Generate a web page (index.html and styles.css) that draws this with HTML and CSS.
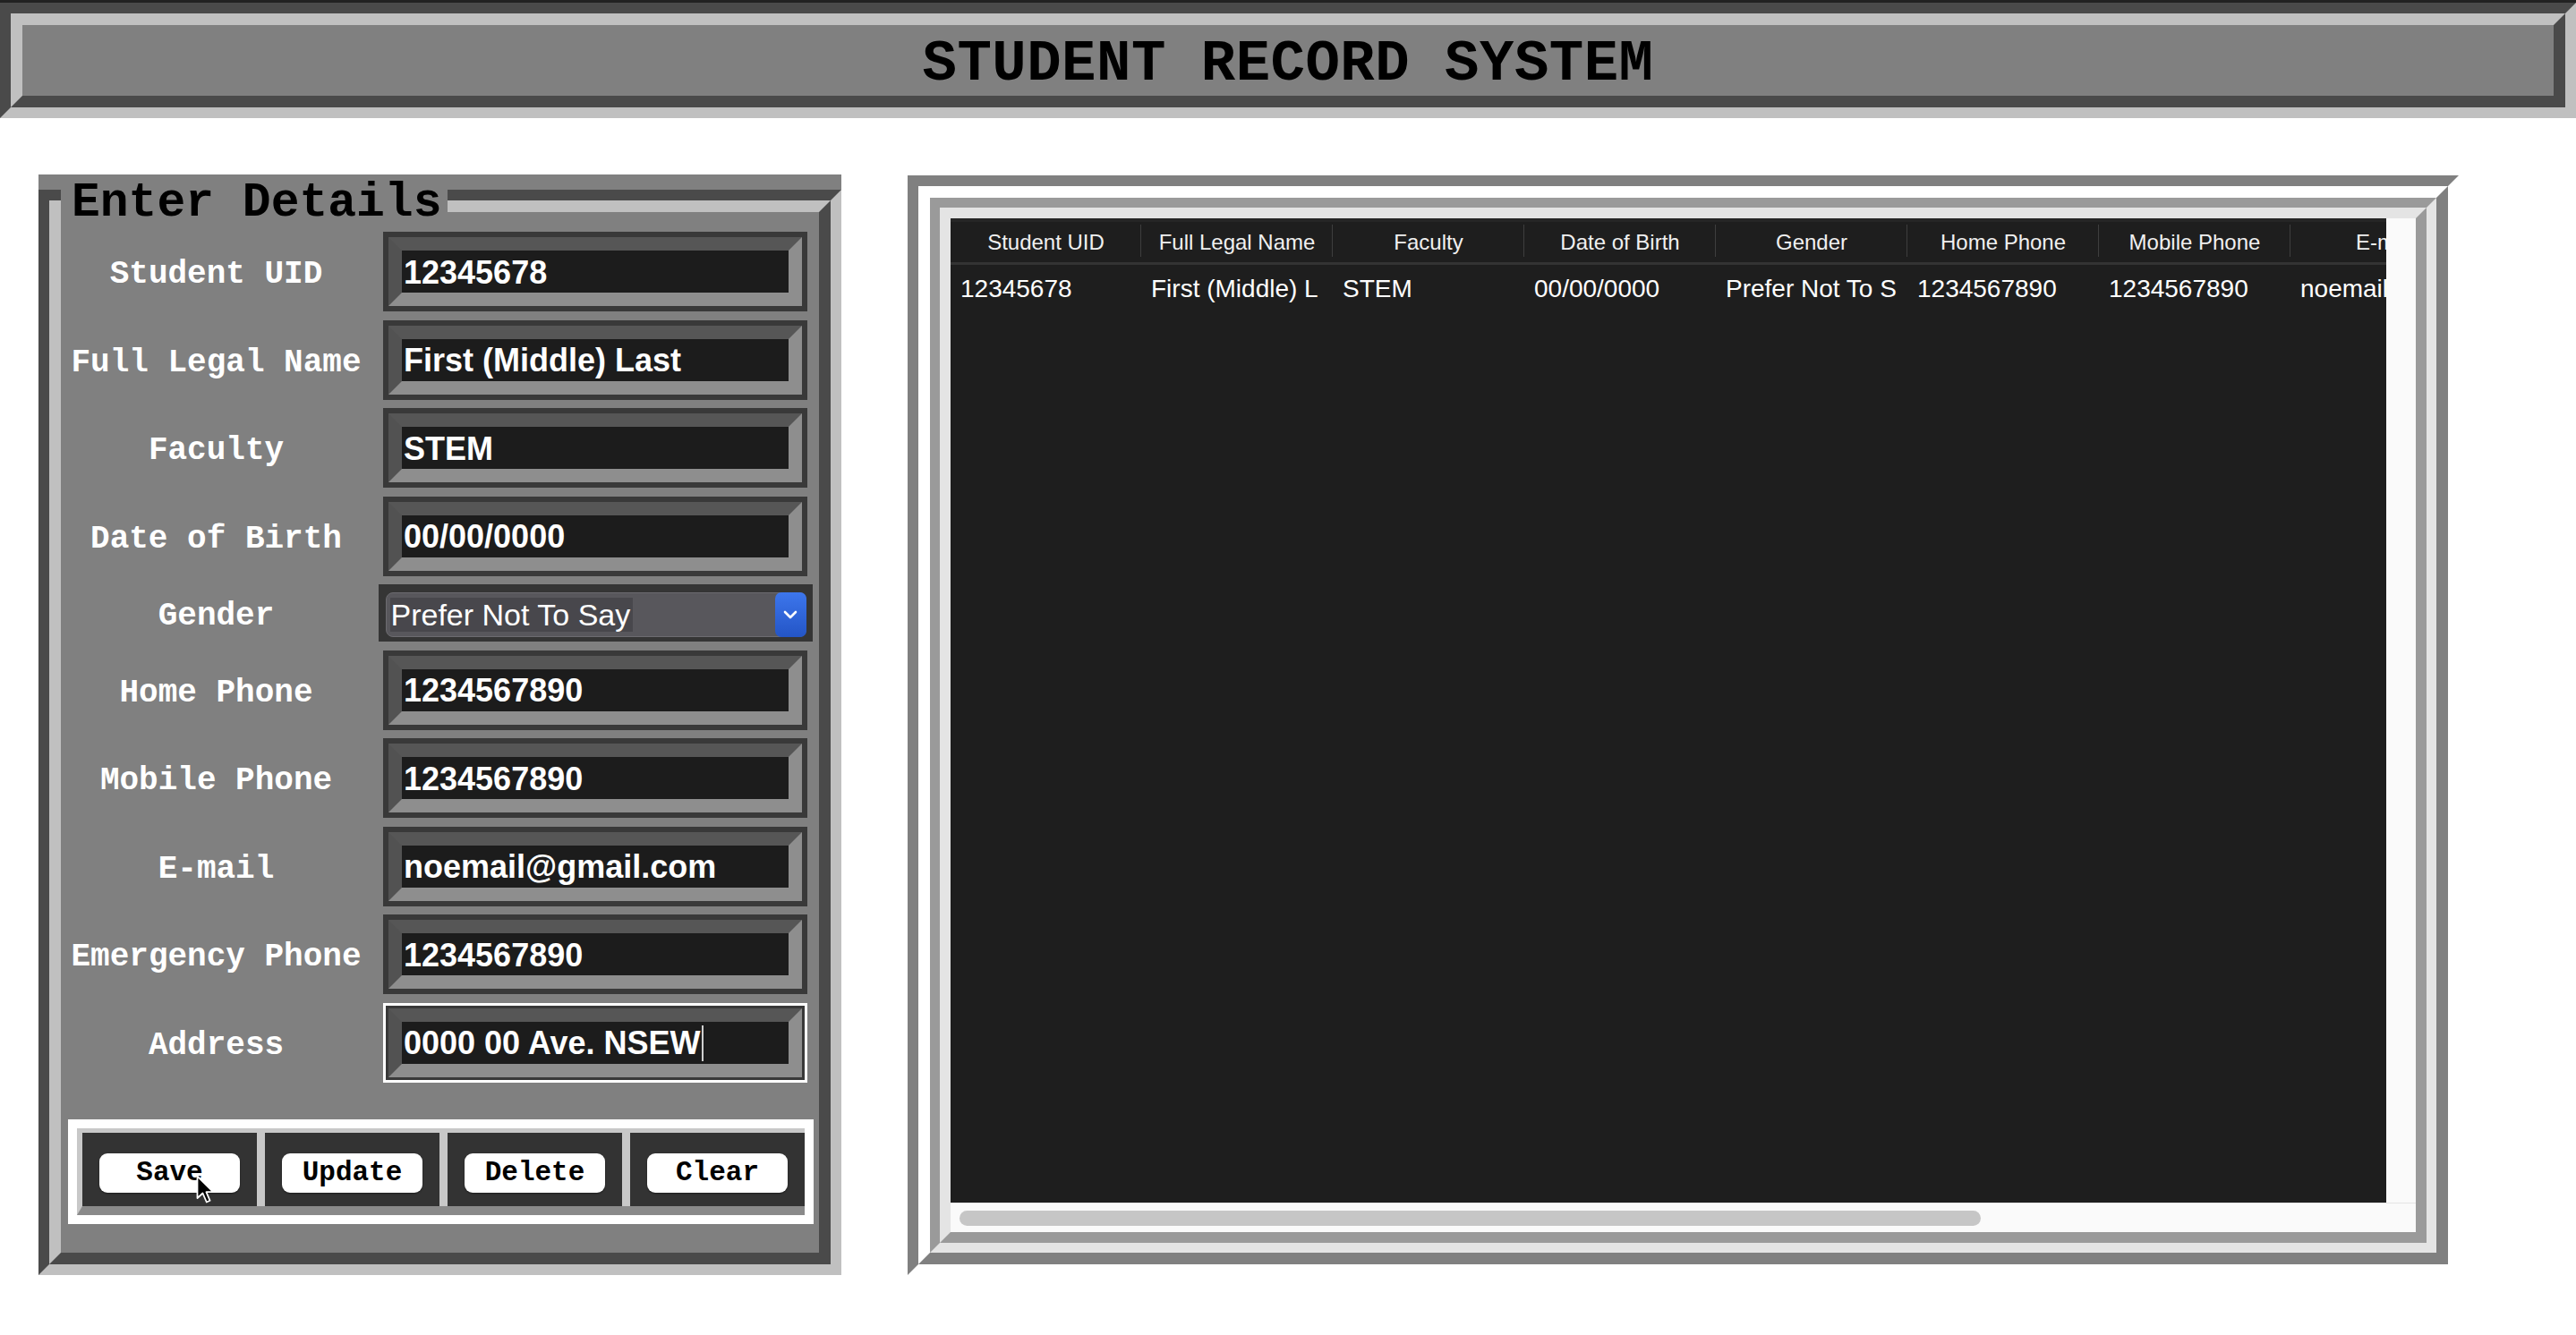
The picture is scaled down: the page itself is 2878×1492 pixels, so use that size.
FILE: index.html
```html
<!DOCTYPE html>
<html lang="en">
<head>
<meta charset="utf-8">
<title>Student Record System</title>
<link rel="stylesheet" href="styles.css">
</head>
<body>
<div class="topline"></div>
<header class="hdr">
  <div class="hdr-in">
    <h1 class="title">STUDENT RECORD SYSTEM</h1>
  </div>
</header>
<main class="main">
  <section class="details">
    <div class="legend">Enter Details</div>
    <div class="groove">
      <div class="groove-in">
        <div class="form">
          <div class="lbl">Student UID</div>
          <div class="field"><div class="bevel"><span class="val">12345678</span></div></div>
          <div class="lbl">Full Legal Name</div>
          <div class="field"><div class="bevel"><span class="val">First (Middle) Last</span></div></div>
          <div class="lbl">Faculty</div>
          <div class="field"><div class="bevel"><span class="val">STEM</span></div></div>
          <div class="lbl">Date of Birth</div>
          <div class="field"><div class="bevel"><span class="val">00/00/0000</span></div></div>
          <div class="lbl">Gender</div>
          <div class="gframe">
            <div class="select">
              <span class="sel-text">Prefer Not To Say</span>
              <span class="sel-btn"><svg width="16" height="10" viewBox="0 0 16 10"><path d="M2 2 L8 8 L14 2" fill="none" stroke="#fff" stroke-width="2.6" stroke-linecap="round" stroke-linejoin="round"/></svg></span>
            </div>
          </div>
          <div class="lbl">Home Phone</div>
          <div class="field"><div class="bevel"><span class="val">1234567890</span></div></div>
          <div class="lbl">Mobile Phone</div>
          <div class="field"><div class="bevel"><span class="val">1234567890</span></div></div>
          <div class="lbl">E-mail</div>
          <div class="field"><div class="bevel"><span class="val">noemail@gmail.com</span></div></div>
          <div class="lbl">Emergency Phone</div>
          <div class="field"><div class="bevel"><span class="val">1234567890</span></div></div>
          <div class="lbl">Address</div>
          <div class="field focus"><div class="bevel"><span class="val">0000 00 Ave. NSEW</span><span class="caret"></span></div></div>
        </div>
        <div class="btnbar">
          <div class="btncells">
            <div class="cell">
              <button class="btn">Save</button>
              <svg class="cursor" width="22" height="34" viewBox="0 0 22 34"><path d="M1.5 1.5 L1.5 26 L7.5 20.5 L11.8 30.5 L15.6 28.8 L11.4 19.2 L19.2 19.2 Z" fill="#000" stroke="#fff" stroke-width="1.8" stroke-linejoin="round"/></svg>
            </div>
            <div class="cell"><button class="btn">Update</button></div>
            <div class="cell"><button class="btn">Delete</button></div>
            <div class="cell"><button class="btn">Clear</button></div>
          </div>
        </div>
      </div>
    </div>
  </section>

  <section class="records">
    <div class="fa"><div class="fb"><div class="fc"><div class="fd">
      <div class="tree">
        <div class="table">
          <div class="thead">
            <div class="th">Student UID</div>
            <div class="th">Full Legal Name</div>
            <div class="th">Faculty</div>
            <div class="th">Date of Birth</div>
            <div class="th">Gender</div>
            <div class="th">Home Phone</div>
            <div class="th">Mobile Phone</div>
            <div class="th">E-mail</div>
          </div>
          <div class="trow">
            <div class="td">12345678</div>
            <div class="td">First (Middle) L</div>
            <div class="td">STEM</div>
            <div class="td">00/00/0000</div>
            <div class="td">Prefer Not To S</div>
            <div class="td">1234567890</div>
            <div class="td">1234567890</div>
            <div class="td">noemail@gmail.com</div>
          </div>
        </div>
        <div class="vstrip"></div>
      </div>
      <div class="hscroll"><div class="thumb"></div></div>
    </div></div></div></div>
  </section>
</main>
</body>
</html>
```
FILE: styles.css
```css
* { box-sizing: border-box; }

body {
  margin: 0;
  background: #ffffff;
  font-family: "Liberation Sans", Arial, sans-serif;
}

.topline {
  height: 3px;
  background: #222222;
}

/* ---------- header ---------- */
.hdr {
  border: 12px solid;
  border-color: #4a4a4a #c0c0c0 #c0c0c0 #4a4a4a;
}
.hdr-in {
  height: 105px;
  border: 13px solid;
  border-color: #c0c0c0 #4a4a4a #4a4a4a #c0c0c0;
  background: #808080;
  display: flex;
  align-items: center;
  justify-content: center;
}
.title {
  margin: 0;
  font: bold 64px/1 "Liberation Mono", "Courier New", monospace;
  color: #000;
  padding-top: 8px;
  letter-spacing: 0.5px;
}

/* ---------- layout ---------- */
.main {
  display: flex;
  align-items: flex-start;
  padding-left: 43px;
  gap: 74px;
}

/* ---------- left panel ---------- */
.details {
  position: relative;
  margin-top: 63px;
  width: 897px;
  padding-top: 17px;
  background: #808080;
}
.legend {
  position: absolute;
  left: 25px;
  top: 7px;
  padding: 0 7px 0 12px;
  background: #808080;
  font: bold 53px/50px "Liberation Mono", "Courier New", monospace;
  color: #000;
  white-space: nowrap;
}
.groove {
  border: 12px solid;
  border-color: #4a4a4a #c0c0c0 #c0c0c0 #4a4a4a;
}
.groove-in {
  border: 13px solid;
  border-color: #c0c0c0 #4a4a4a #4a4a4a #c0c0c0;
  padding: 22px 0 32px 0;
}
.form {
  display: grid;
  grid-template-columns: 347px 500px;
  row-gap: 9.5px;
  align-items: center;
}
.lbl {
  text-align: center;
  font: bold 36px/1 "Liberation Mono", "Courier New", monospace;
  color: #fff;
  white-space: nowrap;
  padding-top: 7px;
}
.field {
  justify-self: center;
  width: 474px;
  height: 89px;
  border: 6px solid #393939;
}
.field.focus {
  border: 3px solid #ffffff;
  padding: 3px;
  background: #393939;
}
.bevel {
  height: 100%;
  border: 15px solid;
  border-color: #565656 #8e8e8e #8e8e8e #525252;
  background: #1c1c1c;
  display: flex;
  align-items: center;
  padding: 2px 0 0 2px;
}
.val {
  font: bold 36px/1 "Liberation Sans", Arial, sans-serif;
  color: #fff;
  white-space: nowrap;
}
.caret {
  display: inline-block;
  width: 2px;
  height: 40px;
  margin-left: 1px;
  background: #cfcfcf;
}

.gframe {
  justify-self: center;
  width: 485px;
  height: 64px;
  background: #353535;
  padding: 9px 7px 5px 8px;
}
.select {
  height: 100%;
  border-radius: 8px;
  background: #58575c;
  border: 1px solid #6c6b70;
  display: flex;
  align-items: center;
  justify-content: space-between;
  padding-left: 4px;
}
.sel-text {
  background: #48474c;
  font: 34px/38px "Liberation Sans", Arial, sans-serif;
  color: #fff;
  padding: 0 3px 0 1px;
  white-space: nowrap;
}
.sel-btn {
  width: 35px;
  height: calc(100% + 2px);
  margin: -1px -1px -1px 0;
  border-radius: 7px;
  background: linear-gradient(#3d76ec, #2455c6);
  display: flex;
  align-items: center;
  justify-content: center;
}

/* ---------- buttons ---------- */
.btnbar {
  margin: 41px 0 0 8px;
  width: 833px;
  border: 10px solid #ffffff;
}
.btncells {
  display: flex;
  gap: 9px;
  background: #c8c8c8;
  border-style: solid;
  border-width: 5px 0 10px 6px;
  border-color: #c8c8c8 #c8c8c8 #8a8a8a #c8c8c8;
}
.cell {
  position: relative;
  flex: 1;
  height: 82px;
  background: #333333;
  display: flex;
  justify-content: center;
  align-items: flex-start;
  padding-top: 23px;
}
.btn {
  width: 157px;
  height: 44px;
  border: 0;
  border-radius: 9px;
  background: #ffffff;
  font: bold 31px/1 "Liberation Mono", "Courier New", monospace;
  color: #000;
  padding: 0;
  box-shadow: 0 1px 2px rgba(0, 0, 0, 0.45);
}
.cursor {
  position: absolute;
  left: 127px;
  top: 47px;
}

/* ---------- right panel ---------- */
.records {
  margin-top: 64px;
  width: 1733px;
}
.fa {
  border: 12px solid;
  border-color: #808080 #ffffff #ffffff #808080;
}
.fb {
  border: 13px solid;
  border-color: #ffffff #808080 #808080 #ffffff;
}
.fc {
  border: 11px solid;
  border-color: #9a9a9a #e4e4e4 #e4e4e4 #9a9a9a;
}
.fd {
  border: 12px solid;
  border-color: #e4e4e4 #9a9a9a #9a9a9a #e4e4e4;
  background: #fafafa;
}
.tree {
  display: flex;
  height: 1100px;
}
.table {
  width: 1604px;
  flex: 0 0 1604px;
  background: #1e1e1e;
  overflow: hidden;
}
.vstrip {
  flex: 1;
  background: #fafafa;
}
.thead {
  display: flex;
  height: 52px;
  border-top: 4px solid #262626;
  border-bottom: 3px solid #333333;
}
.th {
  position: relative;
  flex: 0 0 214px;
  display: flex;
  align-items: center;
  justify-content: center;
  color: #f0f0f0;
  font-size: 24px;
  white-space: nowrap;
}
.th:first-child { flex-basis: 213px; }
.th::after {
  content: "";
  position: absolute;
  right: 0;
  top: 3px;
  bottom: 6px;
  width: 1px;
  background: #3e3e3e;
}
.trow {
  display: flex;
  height: 54px;
}
.td {
  flex: 0 0 214px;
  padding-left: 11px;
  display: flex;
  align-items: center;
  color: #fff;
  font-size: 28px;
  white-space: nowrap;
  overflow: hidden;
}
.td:first-child { flex-basis: 213px; }
.hscroll {
  height: 33px;
  border-top: 1px solid #e4e4e4;
  padding: 8px 0 0 10px;
}
.thumb {
  width: 1141px;
  height: 17px;
  border-radius: 9px;
  background: #c6c6c6;
}
```
